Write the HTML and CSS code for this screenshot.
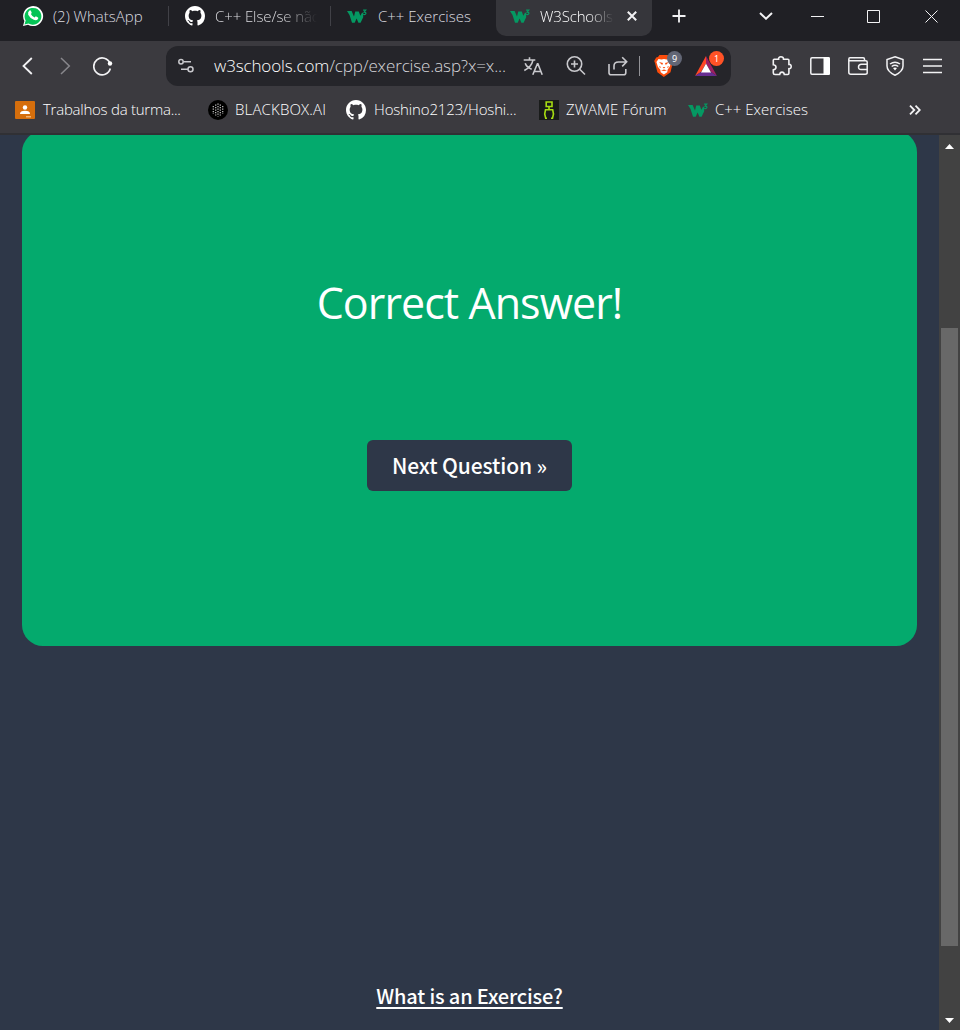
FILE: index.html
```html
<!DOCTYPE html>
<html lang="en">
<head>
<meta charset="utf-8">
<title>W3Schools Exercise</title>
<link rel="stylesheet" href="styles.css">
</head>
<body>
<svg class="defs" width="0" height="0">
  <symbol id="github" viewBox="0 0 16 16"><path fill="#fff" d="M8 0C3.58 0 0 3.58 0 8c0 3.54 2.29 6.53 5.47 7.59.4.07.55-.17.55-.38 0-.19-.01-.82-.01-1.49-2.01.37-2.53-.49-2.69-.94-.09-.23-.48-.94-.82-1.13-.28-.15-.68-.52-.01-.53.63-.01 1.08.58 1.23.82.72 1.21 1.87.87 2.33.66.07-.52.28-.87.51-1.07-1.78-.2-3.64-.89-3.64-3.95 0-.87.31-1.59.82-2.15-.08-.2-.36-1.02.08-2.12 0 0 .67-.21 2.2.82.64-.18 1.32-.27 2-.27s1.36.09 2 .27c1.53-1.04 2.2-.82 2.2-.82.44 1.1.16 1.92.08 2.12.51.56.82 1.27.82 2.15 0 3.07-1.87 3.75-3.65 3.95.29.25.54.73.54 1.48 0 1.07-.01 1.93-.01 2.2 0 .21.15.46.55.38A8.01 8.01 0 0 0 16 8c0-4.42-3.58-8-8-8z"/></symbol>
  <symbol id="w3" viewBox="0 0 20 20"><path fill="#059862" d="M0 5h4.600L7 10.500 8.200 5.500h3.600l1.500 4.200 1.700-3h1.200v4.500l-2.600 5.500h-2.200L9.600 12.500 7.700 16.700H5L2.500 9z"/><path fill="none" stroke="#059862" stroke-width="1.200" d="M16.100 4.200h2.600l-1.500 1.900q1.900 0 1.700 1.500-.5 1.500-2.700.7"/></symbol>
</svg>
<header>
  <div class="tabs">
    <svg width="22" height="22" viewBox="0 0 22 22"><path fill="#fff" d="M1 21l1.400-5A10 10 0 1 1 6 19.700z"/><path fill="#05c456" d="M2.500 19.500l1.200-4A8.400 8.400 0 1 1 6.500 18.400z"/><path fill="#fff" d="M7.500 5.500q1-.6 1.500.5l.7 1.700q.1.500-.8 1.400q1.200 2.500 3.700 3.500l1.200-1.300 2.200 1.100q.6.400 0 1.600-1.500 1.900-4.200.8Q8 13.300 6.200 9.700 5.500 7 7.500 5.500z"/></svg>
    <span class="label t-whatsapp">(2) WhatsApp</span>
    <i class="divider"></i>
    <svg width="20" height="20"><use href="#github"/></svg>
    <span class="label t-else fade">C++ Else/se não</span>
    <i class="divider"></i>
    <svg width="20" height="20"><use href="#w3"/></svg>
    <span class="label t-ex">C++ Exercises</span>
    <div class="active-tab">
      <svg width="20" height="20"><use href="#w3"/></svg>
      <span class="label t-w3 fade">W3Schools</span>
      <svg class="line" width="10" height="10" viewBox="0 0 10 10" stroke-width="2"><path d="M.8.8l8.400 8.400M9.200.8L.8 9.200"/></svg>
    </div>
    <svg class="line" width="14" height="14" viewBox="0 0 14 14" stroke-width="1.800"><path d="M7 .5v13M.5 7h13"/></svg>
    <svg class="line" width="14" height="8" viewBox="0 0 14 8" stroke-width="2"><path d="M1 1l6 5.700L13 1"/></svg>
    <svg class="line" width="13" height="1"><path d="M0 .5h13"/></svg>
    <svg class="line" width="13" height="13"><path d="M.5.500h12v12H.5z"/></svg>
    <svg class="line" width="13" height="13"><path d="M.5.500l12 12m0-12l-12 12"/></svg>
  </div>

  <div class="toolbar">
    <svg class="line" width="11" height="18" viewBox="0 0 11 18" stroke-width="1.800"><path d="M9.800 1L1.500 9l8.300 8"/></svg>
    <svg class="line dim" width="11" height="18" viewBox="0 0 11 18" stroke-width="1.500"><path d="M1 1l8.300 8L1 17"/></svg>
    <svg class="line" width="20" height="20" viewBox="0 0 20 20" stroke-width="1.700"><path d="M17 7.300A8.400 8.400 0 1 0 17.300 12.500"/><circle cx="17" cy="7.500" r="2.200" fill="#fff" stroke="none"/></svg>
    <div class="address">
      <svg class="line grey" width="16" height="16" viewBox="0 0 16 16" stroke-width="1.500"><circle cx="3" cy="3.800" r="2.200"/><path d="M5.500 3.800H13M3 11.300h7"/><circle cx="12.500" cy="11.300" r="2.500"/></svg>
      <span class="url">w3schools.com<span class="path">/cpp/exercise.asp?x=x...</span></span>
      <svg class="line grey" width="20" height="20" viewBox="0 0 20 20" stroke-width="1.600"><path d="M.7 4h11.600M6.500 1.200V4M2.200 7.300q1.500 4.200 6.500 6M10 4.200Q8.500 11 1.300 14.500M9.800 18.700l4.600-11h.5l4.300 11M11.300 15.500h6.500"/></svg>
      <svg class="line grey" width="20" height="20" viewBox="0 0 20 20" stroke-width="1.600"><circle cx="8.500" cy="8" r="7.200"/><path d="M8.500 4.500v7M5 8h7M13.700 13.200l5.300 5.300"/></svg>
      <svg class="line grey" width="20" height="20" viewBox="0 0 20 20" stroke-width="1.600"><path d="M1 8v8.700q0 2 2 2h12.800q2 0 2-2V13M6 13.500V10q0-4 4.500-4H18M14.200 1.200L18.700 5.800l-4.500 4.600"/></svg>
      <i class="rule"></i>
      <div class="badged">
        <svg width="20" height="22" viewBox="0 0 20 22"><path fill="#fc4c0b" d="M5.500 0h8l2 2 2.300.3L19.500 6l-.8 2-2.200 9.200L9.800 22l-6.400-4.800L1 8 .2 6l2-3.500L4 2z"/><path fill="#fff" d="M4.500 4l3 .6L10 4l2.600.6 3-.6 1.800 3-1.700 4.800-2 2.800-.5 2.700-3.300 2.200-3.200-2.200-.4-2.500L4 12 2.400 7z"/><path fill="#fc4c0b" d="M5 7l4 1-.8 2zm10 0l-4 1 .8 2zM5 11l2 1-1 1zm10 0l-2 1 1 1zM8.600 12h2.800l-1.400 1.500zM7 15.500l3-1 3 1-3 .6z"/></svg>
        <span class="badge shield-count">9</span>
      </div>
      <div class="badged">
        <svg width="22" height="20" viewBox="0 0 22 20"><path fill="#ff4724" d="M11 0v7.500L6 16 0 20z"/><path fill="#9e1f63" d="M11 0l11 20-6-4-5-8.500z"/><path fill="#662d91" d="M0 20l6-4h10l6 4z"/><path fill="#fff" d="M11 7.500l5 9H6z"/></svg>
        <span class="badge reward-count">1</span>
      </div>
    </div>
    <svg class="line" width="20" height="20" viewBox="0 0 20 20" stroke-width="1.600"><path d="M2.300 3.300h4.300q-.3-2.500 2.300-2.500t2.600 2.500h4.400q1 0 1 1v4.100q2.300-.2 2.300 2.100t-2.300 2.200v4.600q0 1.200-1.200 1.200h-3.400q-.3-2.400-2.300-2.400t-2.300 2.400H3q-1.700 0-1.700-1.500v-3.200q2.700-.5 2.700-2.600T1.300 8.700V4.300q0-1 1-1z"/></svg>
    <svg class="line" width="20" height="18" viewBox="0 0 20 18" stroke-width="1.500"><rect x=".8" y=".8" width="18.400" height="16.400" rx="1.200"/><path fill="#fff" stroke="none" d="M13.500 0H18.500Q20 0 20 1.500V16.500Q20 18 18.500 18H13.500z"/></svg>
    <svg class="line" width="20" height="18" viewBox="0 0 20 18" stroke-width="1.500"><path d="M16.500 3.800V2q0-1.200-1.300-1.200H2Q.8.800.8 2.300v12.900q0 2 2 2h14.400q2 0 2-1.500V5q0-1.200-1.500-1.200H2Q.8 3.800.8 2.300M19 7.200h-5.500q-3 0-3 2.800t3 2.500H19"/></svg>
    <svg class="line" width="18" height="20" viewBox="0 0 18 20" stroke-width="1.500"><path d="M9 .8L17 3.500V10q0 5.500-8 9.200Q1 15.500 1 10V3.500z"/><path d="M4 8q5-3.700 10 0M5.700 10.500q3.300-2.300 6.600 0"/><path fill="#fff" stroke="none" d="M7 12q2-1.200 4 0l-2 2.500z"/></svg>
    <svg class="line" width="19" height="16" stroke-width="1.700"><path d="M0 1.500h19M0 8h19M0 14.500h19"/></svg>
  </div>

  <div class="bookmarks">
    <svg width="20" height="18" viewBox="0 0 20 18"><rect width="20" height="18" rx="1" fill="#d56e0c"/><circle cx="10" cy="6.500" r="2.200" fill="#fff"/><path fill="#fff" d="M5 13q0-3.200 5-3.200t5 3.200z"/><path fill="#f3b36e" d="M11 15h5v1.500h-5z"/></svg>
    <span class="label b-turma">Trabalhos da turma...</span>
    <svg width="20" height="20" viewBox="0 0 20 20"><circle cx="10" cy="10" r="10" fill="#000"/><g fill="none" stroke="#bbb" stroke-width="1.300" stroke-dasharray="1.200 1.300"><path d="M10 3.500v13M7.700 4.500v11M12.300 4.500v11M5.300 6v8M14.700 6v8"/></g></svg>
    <span class="label b-blackbox">BLACKBOX.AI</span>
    <svg width="20" height="20"><use href="#github"/></svg>
    <span class="label b-hoshino">Hoshino2123/Hoshi...</span>
    <svg width="20" height="20" viewBox="0 0 20 20"><path fill="#191b1a" d="M0 0h20v20H0z"/><path fill="none" stroke="#a6dc12" stroke-width="1.600" d="M7.200 2h5.800v4.500H7.200zM10 6.500V9M8 18.200H6.700L5.700 14l.8-4.200h7.200l.8 4.200-1 4.200H12"/></svg>
    <span class="label b-zwame">ZWAME Fórum</span>
    <svg width="20" height="20"><use href="#w3"/></svg>
    <span class="label b-ex">C++ Exercises</span>
    <svg class="line" width="12" height="10" viewBox="0 0 12 10" stroke-width="1.800"><path d="M1 .7L5.300 5 1 9.300M6.500.7L10.800 5 6.500 9.300"/></svg>
  </div>
</header>

<div class="viewport">
  <main>
    <section class="result">
      <h1>Correct Answer!</h1>
      <button class="next">Next Question »</button>
    </section>
    <a class="about">What is an Exercise?</a>
  </main>
  <div class="scrollbar">
    <svg width="9" height="5"><path fill="#fff" d="M0 5L4.500 0 9 5z"/></svg>
    <div class="thumb"></div>
    <svg width="9" height="5"><path fill="#fff" d="M0 0h9L4.500 5z"/></svg>
  </div>
</div>
</body>
</html>
```
FILE: styles.css
```css
* { box-sizing: border-box; }
body {
  margin: 0;
  width: 960px;
  height: 1030px;
  overflow: hidden;
  background: #2e3748;
  color: #fff;
  font-family: "Open Sans", "Noto Sans", sans-serif;
}
svg { display: block; }
.defs { position: absolute; }
header { background: #3b3a3f; height: 135px; border-bottom: 2px solid #303034; }
.line { fill: none; stroke: #f2f2f4; }
.grey { stroke: #c9c9cd; }
.dim { stroke: #88878c; }
.label { font-size: 15px; font-weight: 300; line-height: 20px; white-space: nowrap; }

.tabs, .toolbar, .bookmarks { display: grid; align-items: center; }
.tabs {
  height: 41px;
  padding: 0 0 9px 22px;
  background: #202025;
  color: #dcdce0;
  grid-template-rows: 32px;
  grid-template-columns: 31px 115px 17px 30px 115px 17px 31px 118px 176px 87px 52px 56px 58px 13px;
}
.tabs .label { margin-top: -1px; }
.divider { width: 1px; height: 20px; background: #414147; }
.fade { -webkit-mask-image: linear-gradient(90deg, #000 65%, transparent 100%); mask-image: linear-gradient(90deg, #000 65%, transparent 100%); }
.t-else { width: 102px; letter-spacing: -.1px; }
.t-w3 { width: 74px; letter-spacing: -.15px; }
.active-tab {
  display: grid;
  grid-template-columns: 30px 87px 10px;
  align-items: center;
  align-self: start;
  width: 156px;
  height: 36px;
  padding: 0 0 4px 14px;
  border-radius: 0 0 10px 10px;
  background: #36363b;
  color: #fff;
}

.toolbar { height: 50px; padding-left: 22px; grid-template-columns: 38px 33px 73px 606px 38px 38px 38px 37px 19px; }
.address {
  display: grid;
  align-items: center;
  grid-template-columns: 36px 309px 43px 42px 31px 15px 41px 22px;
  width: 565px;
  height: 40px;
  padding-left: 12px;
  border-radius: 12px;
  background: #25252a;
}
.url { font-size: 17px; font-weight: 300; line-height: 24px; letter-spacing: -.13px; white-space: nowrap; color: #fff; }
.path { color: #d6d6da; }
.rule { width: 1px; height: 20px; background: #929297; }
.badged { position: relative; }
.badge {
  position: absolute;
  top: -4px;
  left: 13px;
  width: 15px;
  height: 15px;
  border-radius: 50%;
  font: 9px/15px "Noto Sans", sans-serif;
  text-align: center;
}
.shield-count { background: #626675; }
.reward-count { left: 14px; top: -5px; background: #ff5226; }

.bookmarks { height: 38px; padding-left: 15px; grid-template-columns: 28px 165px 27px 111px 28px 165px 27px 122px 27px 194px 12px; }
.bookmarks .label { margin-top: -2px; }
.b-turma { letter-spacing: -.25px; }
.b-blackbox { letter-spacing: .15px; }
.b-hoshino { letter-spacing: -.15px; }

.viewport { display: flex; height: 895px; overflow: hidden; }
main { flex: 1; display: flex; flex-direction: column; align-items: flex-start; padding-left: 22px; }
.result {
  display: flex;
  flex-direction: column;
  align-items: center;
  width: 895px;
  height: 515px;
  margin-top: -4px;
  border-radius: 21px;
  background: #04aa6d;
}
h1 { margin: 142px 0 0; font: 400 43px/60px "Open Sans", sans-serif; letter-spacing: -.95px; white-space: nowrap; }
.next {
  width: 205px;
  height: 51px;
  margin-top: 107px;
  padding: 0;
  border: 0;
  border-radius: 6px;
  background: #2e3748;
  color: #fff;
  font: 500 21px/51px "Noto Sans CJK SC", sans-serif;
  letter-spacing: -.1px;
  white-space: nowrap;
}
.about {
  width: 895px;
  margin-top: 335px;
  text-align: center;
  font: 500 20px/30px "Noto Sans CJK SC", sans-serif;
  letter-spacing: -.15px;
  text-decoration: underline;
  text-decoration-thickness: 2px;
  text-underline-offset: 3px;
}
.scrollbar { width: 21px; display: flex; flex-direction: column; align-items: center; padding-top: 9px; background: #424242; }
.thumb { width: 17px; height: 618px; margin: 179px 0 72px; background: #686868; }
```
